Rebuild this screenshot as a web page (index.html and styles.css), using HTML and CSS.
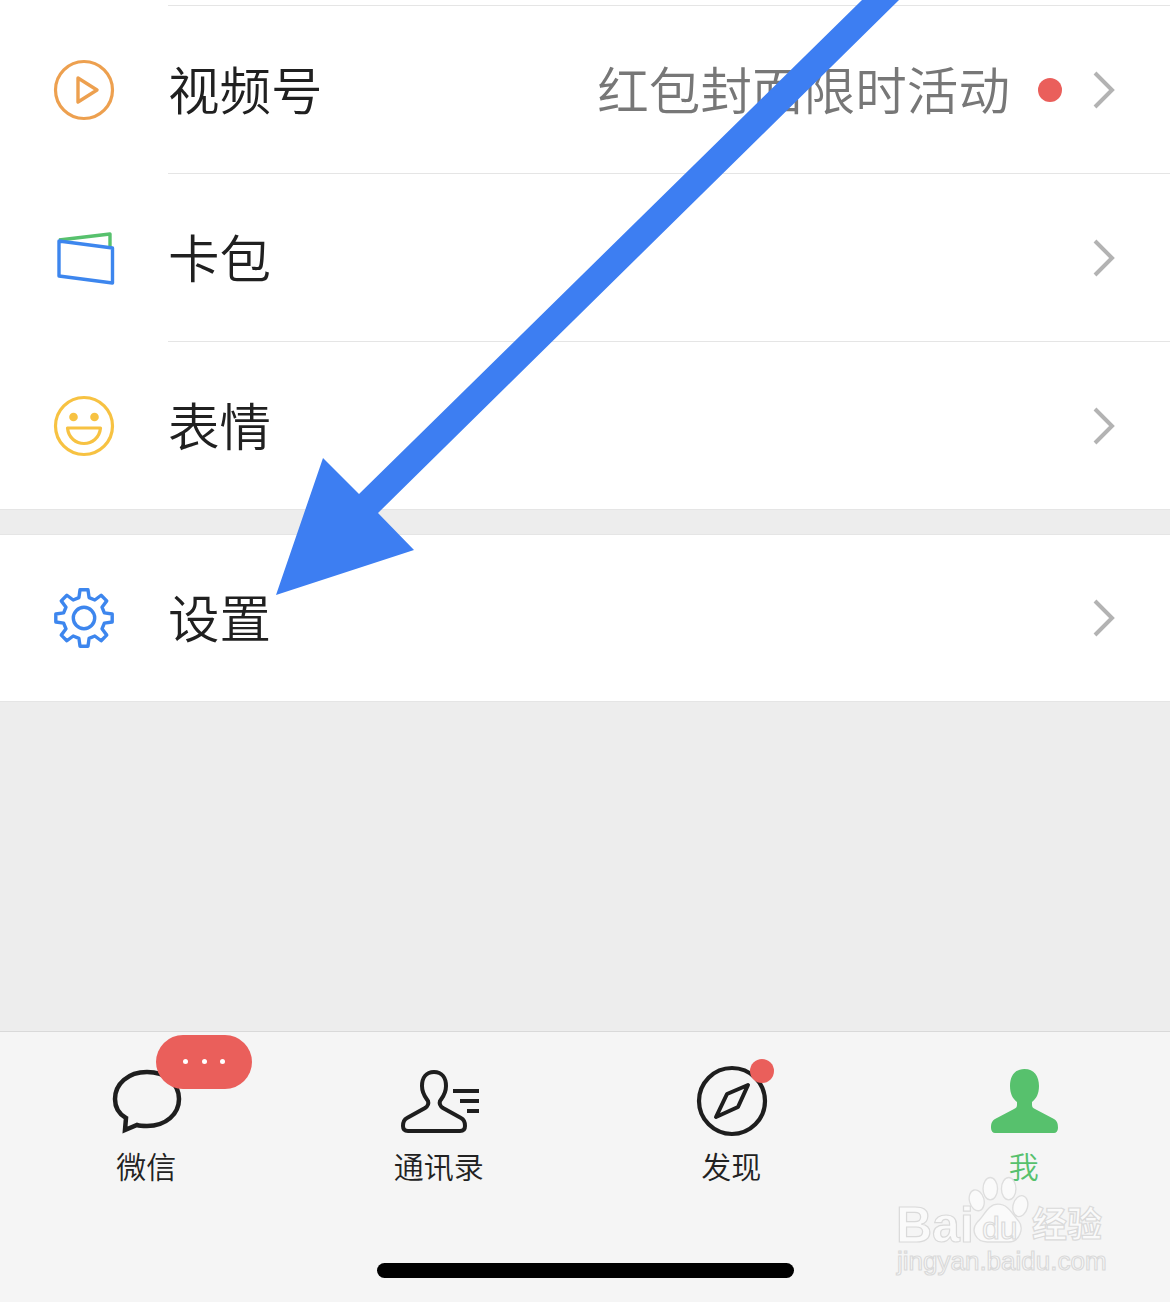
FILE: index.html
```html
<!DOCTYPE html>
<html lang="zh-CN">
<head>
<meta charset="utf-8">
<title>我</title>
<link rel="stylesheet" href="styles.css">
</head>
<body>
<div class="app">
  <main class="content">
    <section class="group group-main">
      <div class="row">
        <svg class="row-icon" viewBox="0 0 60 60"><circle cx="30" cy="30" r="28.5" fill="none" stroke="#eda04f" stroke-width="3.2"/><path d="M24 18 L43 30 L24 42 Z" fill="none" stroke="#eda04f" stroke-width="3.4" stroke-linejoin="round"/></svg>
        <div class="row-body">
          <span class="row-label">视频号</span>
          <span class="row-note">红包封面限时活动</span>
          <span class="row-dot"></span>
          <svg class="chevron" viewBox="0 0 24 40"><path d="M3 3 L20 20 L3 37" fill="none" stroke="#b3b3b3" stroke-width="4"/></svg>
        </div>
      </div>
      <div class="row">
        <svg class="row-icon" viewBox="0 0 60 60"><path d="M5 12 L56 6 L56 19" fill="none" stroke="#57c16d" stroke-width="3.4" stroke-linejoin="round"/><path d="M5 13 L58.5 20 L58.5 55 L5 48 Z" fill="none" stroke="#3d86ee" stroke-width="3.4" stroke-linejoin="round"/></svg>
        <div class="row-body">
          <span class="row-label">卡包</span>
          <svg class="chevron" viewBox="0 0 24 40"><path d="M3 3 L20 20 L3 37" fill="none" stroke="#b3b3b3" stroke-width="4"/></svg>
        </div>
      </div>
      <div class="row">
        <svg class="row-icon" viewBox="0 0 60 60"><circle cx="30" cy="30" r="28.5" fill="none" stroke="#f7c242" stroke-width="3.2"/><circle cx="19.5" cy="21" r="4.3" fill="#f7c242"/><circle cx="40.5" cy="21" r="4.3" fill="#f7c242"/><path d="M13.5 32 L46.5 32 C45.5 42 38 47.5 30 47.5 C22 47.5 14.5 42 13.5 32 Z" fill="none" stroke="#f7c242" stroke-width="3.2" stroke-linejoin="round"/></svg>
        <div class="row-body">
          <span class="row-label">表情</span>
          <svg class="chevron" viewBox="0 0 24 40"><path d="M3 3 L20 20 L3 37" fill="none" stroke="#b3b3b3" stroke-width="4"/></svg>
        </div>
      </div>
    </section>
    <section class="group group-settings">
      <div class="row row-settings">
        <svg class="row-icon row-icon-plain" viewBox="-30 -30 60 60"><path d="M-5.08 -20.37 L-3.97 -28.2 L3.97 -28.2 L5.08 -20.37 L10.81 -18 L17.13 -22.75 L22.75 -17.13 L18 -10.81 L20.37 -5.08 L28.2 -3.97 L28.2 3.97 L20.37 5.08 L18 10.81 L22.75 17.13 L17.13 22.75 L10.81 18 L5.08 20.37 L3.97 28.2 L-3.97 28.2 L-5.08 20.37 L-10.81 18 L-17.13 22.75 L-22.75 17.13 L-18 10.81 L-20.37 5.08 L-28.2 3.97 L-28.2 -3.97 L-20.37 -5.08 L-18 -10.81 L-22.75 -17.13 L-17.13 -22.75 L-10.81 -18 Z" fill="none" stroke="#3d86ee" stroke-width="3.4" stroke-linejoin="round"/><circle r="10.7" fill="none" stroke="#3d86ee" stroke-width="3.4"/></svg>
        <div class="row-body">
          <span class="row-label">设置</span>
          <svg class="chevron" viewBox="0 0 24 40"><path d="M3 3 L20 20 L3 37" fill="none" stroke="#b3b3b3" stroke-width="4"/></svg>
        </div>
      </div>
    </section>
  </main>

  <nav class="tabbar">
    <div class="tabs">
      <div class="tab">
        <div class="tab-icon">
          <svg viewBox="0 0 80 66"><path d="M41 4 C22 4 9 16 9 31 C9 39 13 46 20 50 L19 62 L31 57 C34 58 38 58 41 58 C60 58 73 46 73 31 C73 16 60 4 41 4 Z" fill="none" stroke="#1e1e1e" stroke-width="4.5"/></svg>
          <span class="pill"><i></i><i></i><i></i></span>
        </div>
        <span class="tab-label">微信</span>
      </div>
      <div class="tab">
        <div class="tab-icon">
          <svg viewBox="0 0 80 66"><path d="M35 4 C27 4 23 10 23 18 C23 26 27 30 29 33 C30 36 29 38 26 40 L8 50 C4 52 4 55 4 58 C4 62 6 63 9 63 L61 63 C64 63 66 62 66 58 C66 55 66 52 62 50 L44 40 C41 38 40 36 41 33 C43 30 47 26 47 18 C47 10 43 4 35 4 Z" fill="none" stroke="#1e1e1e" stroke-width="4"/><path d="M54 23 H80 M61 33 H80 M68 43 H80" stroke="#1e1e1e" stroke-width="4"/></svg>
        </div>
        <span class="tab-label">通讯录</span>
      </div>
      <div class="tab">
        <div class="tab-icon">
          <svg viewBox="0 0 80 66"><circle cx="41" cy="33" r="33" fill="none" stroke="#1e1e1e" stroke-width="4.2"/><path d="M57 17 L36 26 L25 49 L47 39 Z" fill="none" stroke="#1e1e1e" stroke-width="4" stroke-linejoin="round"/></svg>
          <span class="badge"></span>
        </div>
        <span class="tab-label">发现</span>
      </div>
      <div class="tab tab-active">
        <div class="tab-icon">
          <svg viewBox="0 0 80 66"><path d="M40.5 1 C31 1 26 8 26 18 C26 26 29 31 33 34 L33 37 C33 39 32 40 30 41 L11 51 C8 53 7 55 7 60 C7 63 9 65 11 65 L70 65 C72 65 74 63 74 60 C74 55 73 53 70 51 L51 41 C49 40 48 39 48 37 L48 34 C52 31 55 26 55 18 C55 8 50 1 40.5 1 Z" fill="#57c16d"/></svg>
        </div>
        <span class="tab-label">我</span>
      </div>
    </div>
    <div class="home-bar"></div>
  </nav>

  <svg class="arrow" viewBox="0 0 1170 1302"><polygon fill="#3d7ef2" points="862,0 899,0 378,513 414,550 276,595 323,458 359,494"/></svg>

  <div class="watermark">
    <svg class="paw" viewBox="0 0 64 70"><g fill="#fafafa" stroke="#dedede" stroke-width="1.4"><ellipse cx="9" cy="25" rx="7.5" ry="11" transform="rotate(-15 9 25)"/><ellipse cx="23" cy="13" rx="7.5" ry="11.5"/><ellipse cx="42" cy="13" rx="7.5" ry="11.5"/><ellipse cx="54" cy="31" rx="7.5" ry="11" transform="rotate(15 54 31)"/><path d="M31 29 C42 29 46 40 52 46 C58 53 54 68 42 68 L20 68 C8 68 2 56 10 47 C17 41 20 29 31 29 Z"/></g></svg>
    <span class="wm-bai">Bai</span>
    <span class="wm-du">du</span>
    <span class="wm-jy">经验</span>
    <span class="wm-url">jingyan.baidu.com</span>
  </div>
</div>
</body>
</html>
```
FILE: styles.css
```css
* { box-sizing: border-box; }
html, body { margin: 0; padding: 0; height: 100%; }
body {
  font-family: "Noto Sans CJK SC", "Noto Sans", sans-serif;
  background: #ededed;
  overflow: hidden;
}
.app {
  position: relative;
  width: 1170px;
  height: 1302px;
  display: flex;
  flex-direction: column;
}
.content { flex: 1; }
.group { background: #fff; }
.group-main {
  padding-top: 5px;
  border-bottom: 1px solid #e5e5e5;
}
.group-settings {
  margin-top: 24px;
  border-top: 1px solid #e5e5e5;
  border-bottom: 1px solid #e5e5e5;
}
.row {
  display: flex;
  align-items: stretch;
  height: 168px;
  padding-left: 54px;
}
.row-settings { height: 166px; }
.row-icon {
  width: 60px;
  height: 60px;
  flex: none;
  align-self: center;
  margin-top: 2px;
  margin-right: 54px;
  overflow: visible;
}
.row-icon-plain { margin-top: 0; }
.row-body {
  flex: 1;
  display: flex;
  align-items: center;
  border-top: 1px solid #e5e5e5;
  padding-right: 54px;
}
.row-settings .row-body { border-top: 0; }
.row-label {
  flex: 1;
  font-size: 51.5px;
  font-weight: 350;
  color: #202020;
  line-height: 1;
  padding-bottom: 4px;
}
.row-note {
  font-size: 51.6px;
  font-weight: 350;
  color: #777;
  line-height: 1;
  margin-right: 28px;
  padding-bottom: 4px;
}
.row-dot {
  width: 24px;
  height: 24px;
  border-radius: 50%;
  background: #ea5f5b;
  margin-right: 30px;
}
.chevron {
  width: 24px;
  height: 40px;
  flex: none;
}
.tabbar {
  flex: none;
  height: 271px;
  background: #f5f5f5;
  border-top: 1px solid #d9d9d9;
  display: flex;
  flex-direction: column;
  align-items: center;
}
.tabs {
  width: 100%;
  display: grid;
  grid-template-columns: repeat(4, 1fr);
  padding-top: 36px;
}
.tab {
  display: flex;
  flex-direction: column;
  align-items: center;
  gap: 9px;
}
.tab-icon {
  position: relative;
  width: 80px;
  height: 66px;
}
.tab-icon svg {
  display: block;
  width: 80px;
  height: 66px;
  overflow: visible;
}
.tab-label {
  font-size: 30px;
  font-weight: 350;
  line-height: 44px;
  color: #222;
}
.tab-active .tab-label { color: #57c16d; }
.pill {
  position: absolute;
  left: 50px;
  top: -33px;
  width: 96px;
  height: 54px;
  border-radius: 27px;
  background: #ea5f5b;
  display: flex;
  align-items: center;
  justify-content: center;
  gap: 13.5px;
  padding-bottom: 2px;
}
.pill i {
  width: 5px;
  height: 5px;
  border-radius: 50%;
  background: #fff;
}
.badge {
  position: absolute;
  left: 59px;
  top: -9px;
  width: 24px;
  height: 24px;
  border-radius: 50%;
  background: #ea5f5b;
}
.home-bar {
  width: 417px;
  height: 15px;
  border-radius: 8px;
  background: #000;
  margin-top: 76px;
}
.arrow {
  position: absolute;
  left: 0;
  top: 0;
  width: 1170px;
  height: 1302px;
  pointer-events: none;
}
.watermark {
  position: absolute;
  left: 896px;
  top: 1174px;
  width: 214px;
  height: 104px;
  color: #fafafa;
  -webkit-text-stroke: 1.2px #dadada;
  font-family: "Liberation Sans", sans-serif;
}
.paw {
  position: absolute;
  left: 72px;
  top: 1px;
  width: 62px;
  height: 70px;
}
.wm-bai, .wm-du, .wm-jy, .wm-url {
  position: absolute;
  white-space: nowrap;
}
.wm-bai {
  left: 0;
  top: 30px;
  font-size: 50px;
  line-height: 42px;
  font-weight: 700;
}
.wm-du {
  left: 86px;
  top: 38px;
  font-size: 32px;
  line-height: 32px;
}
.wm-jy {
  left: 136px;
  top: 30px;
  font-size: 35px;
  line-height: 35px;
  font-weight: 700;
  font-family: "Noto Sans CJK SC", sans-serif;
}
.wm-url {
  left: 1px;
  top: 74px;
  font-size: 26px;
  line-height: 26px;
}
```
